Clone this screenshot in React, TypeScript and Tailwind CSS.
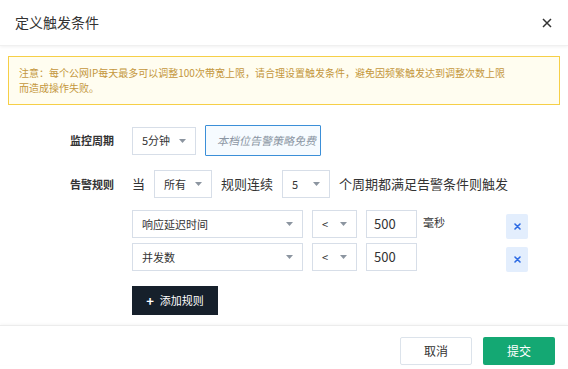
import React from "react";

const Caret = () => (
  <svg width="7" height="4" viewBox="0 0 7 4" className="shrink-0">
    <path d="M0 0 L7 0 L3.5 4 Z" fill="#8c95a0" />
  </svg>
);

function Select({ w, label, textCls = "text-[11px]" }: { w: string; label: string; textCls?: string }) {
  return (
    <div
      className={`${w} h-[28px] flex items-center justify-between border border-[#d7dee8] bg-white pl-[9px] pr-[9px] text-[#333] ${textCls}`}
    >
      <span>{label}</span>
      <Caret />
    </div>
  );
}

const DelBtn = () => (
  <div className="w-[22px] h-[25px] mt-[4px] bg-[#e3eefd] rounded-[2px] flex items-center justify-center">
    <svg width="7" height="7" viewBox="0 0 7 7">
      <path d="M1 1 L6 6 M6 1 L1 6" stroke="#2d6be4" strokeWidth="1.6" strokeLinecap="round" />
    </svg>
  </div>
);

export default function App() {
  return (
    <div
      className="w-[568px] h-[369px] bg-white text-[#333] overflow-hidden"
      style={{ fontFamily: '"Noto Sans CJK SC", "Noto Sans", sans-serif' }}
    >
      {/* header */}
      <div className="h-[46px] flex items-center justify-between pl-[15px] pr-[16px] shadow-[0_1px_3px_rgba(0,0,0,0.06)] border-b border-[#f0f0f0]">
        <span className="text-[14px] text-[#333] leading-none pb-[2px]">定义触发条件</span>
        <svg width="10" height="10" viewBox="0 0 10 10">
          <path d="M1 1 L9 9 M9 1 L1 9" stroke="#333" strokeWidth="1.5" />
        </svg>
      </div>

      {/* alert */}
      <div className="mt-[10px] mx-[8px] border border-[#f6cf47] bg-[#fffdf0] pl-[10px] pr-[10px] pt-[8px] pb-[9px] text-[10px] leading-[15px] text-[#c4973c]">
        注意：每个公网IP每天最多可以调整100次带宽上限，请合理设置触发条件，避免因频繁触发达到调整次数上限
        <br />
        而造成操作失败。
      </div>

      {/* form */}
      <div className="mt-[20px] grid grid-cols-[44px_1fr] gap-x-[18px] pl-[70px]">
        {/* row 1 */}
        <div className="flex items-center text-[11px] font-bold text-[#333] whitespace-nowrap">监控周期</div>
        <div className="flex items-center gap-[9px] h-[31px]">
          <Select w="w-[64px]" label="5分钟" />
          <div className="w-[116px] h-[31px] border border-[#3b8fd8] bg-[#f6fbff] flex items-center pl-[11px] text-[11px] italic text-[#8b96a3] rounded-[1px]">
            本档位告警策略免费
          </div>
        </div>

        {/* row 2 */}
        <div className="mt-[14px] flex items-center text-[11px] font-bold text-[#333] whitespace-nowrap">告警规则</div>
        <div className="mt-[14px] flex items-center gap-[9px] h-[28px] text-[13px] text-[#333] whitespace-nowrap">
          <span>当</span>
          <Select w="w-[58px]" label="所有" />
          <span>规则连续</span>
          <Select w="w-[48px]" label="5" />
          <span>个周期都满足告警条件则触发</span>
        </div>

        {/* rules */}
        <div />
        <div className="mt-[12px] flex flex-col gap-[4px]">
          <div className="flex items-start">
            <Select w="w-[171px]" label="响应延迟时间" />
            <div className="ml-[9px]">
              <Select w="w-[45px]" label="<" />
            </div>
            <div className="ml-[9px] w-[51px] h-[28px] border border-[#d7dee8] flex items-center pl-[7px] text-[13px] text-[#333]">
              500
            </div>
            <div className="w-[89px] h-[28px] pl-[6px] flex items-center text-[11px] text-[#333] pb-[3px]">毫秒</div>
            <DelBtn />
          </div>
          <div className="flex items-start">
            <Select w="w-[171px]" label="并发数" />
            <div className="ml-[9px]">
              <Select w="w-[45px]" label="<" />
            </div>
            <div className="ml-[9px] w-[51px] h-[28px] border border-[#d7dee8] flex items-center pl-[7px] text-[13px] text-[#333]">
              500
            </div>
            <div className="w-[89px] h-[28px]" />
            <DelBtn />
          </div>
        </div>

        {/* add button */}
        <div />
        <div className="mt-[14px]">
          <div className="w-[86px] h-[29px] bg-[#16202b] text-white text-[11px] flex items-center justify-center gap-[6px]">
            <span className="text-[13px] leading-none font-bold">+</span>
            <span>添加规则</span>
          </div>
        </div>
      </div>

      {/* footer */}
      <div className="mt-[10px] border-t border-[#ececec] shadow-[0_-1px_3px_rgba(0,0,0,0.04)] flex justify-end gap-[11px] pt-[11px] pr-[13px]">
        <div className="w-[72px] h-[28px] border border-[#dce3eb] rounded-[2px] flex items-center justify-center text-[12px] text-[#333]">
          取消
        </div>
        <div className="w-[72px] h-[28px] bg-[#14a873] rounded-[2px] flex items-center justify-center text-[12px] text-white">
          提交
        </div>
      </div>
    </div>
  );
}
